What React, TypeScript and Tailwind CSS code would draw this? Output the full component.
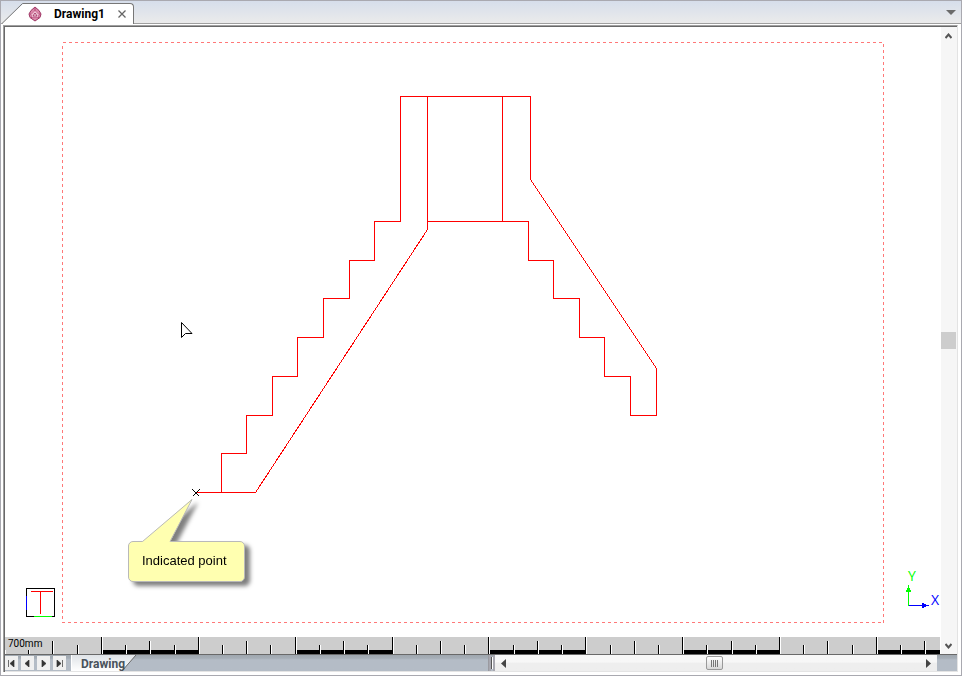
import React from 'react';

// Stair section, in window units
const OUTLINES = [
  '195,492 255,492 427,229 427,96',
  '221,492 221,453 246,453 246,415 272,415 272,376 297,376 297,337 323,337 323,298 349,298 349,260 374,260 374,221 400,221 400,96 530,96 530,179 656,368 656,415 630,415 630,376 604,376 604,337 579,337 579,298 553,298 553,260 528,260 528,221 427,221',
  '502,96 502,221',
];

const RULER_STEP = 24.22;
const RULER_TICKS = Array.from({ length: 160 }, (_, i) => i);

const DrawingIcon: React.FC = () => (
  <svg className="size-4" viewBox="0 0 16 16" aria-hidden="true">
    <path d="M8 1 L12 4.5 L14 8 L13 11.5 L8 15 L3 11.5 L2 8 L4 4.5 Z" fill="#d987a8" stroke="#9c3563" />
    <path d="M8 4.5 L12 8.5 L11 11.5 L5 11.5 L4 8.5 Z" fill="#f0c6d6" stroke="#c2608c" strokeWidth="0.8" />
    <path d="M8 1 V5 M4 12 L5 11 M12 12 L11 11 M2 8 H4 M14 8 H12" stroke="#b34a78" fill="none" />
    <path d="M8 7 L10 10 H6 Z" fill="#fff" stroke="#a83c6c" />
  </svg>
);

const DocumentTabs: React.FC = () => (
  <header className="flex h-[23px] shrink-0 items-end border-b border-[#a0a0a0] bg-linear-to-b from-[#d6deeb] to-[#ebebeb]">
    <div className="-mb-px flex h-[21px]">
      <svg className="h-[21px] w-[23px]" viewBox="0 0 23 21" aria-hidden="true">
        <path d="M1 21 L22 1 L23 1 L23 21 Z" fill="#fff" />
        <path d="M1 20.5 L21.5 0.5 L23 0.5" fill="none" stroke="#777" />
      </svg>
      <div className="flex items-center rounded-tr-sm border-t border-r border-[#777] bg-white pr-[5px]">
        <button className="flex items-center gap-[11px] pl-[3px] font-[Roboto,sans-serif] text-[12px] leading-4 font-bold text-black">
          <DrawingIcon />
          Drawing1
        </button>
        <button aria-label="Close Drawing1" className="ml-[11px] flex size-3 items-center justify-center">
          <svg className="size-2" viewBox="0 0 8 8">
            <path d="M0.5 0.5 L7.5 7.5 M7.5 0.5 L0.5 7.5" stroke="#666" strokeWidth="1.3" />
          </svg>
        </button>
      </div>
    </div>
    <button aria-label="Open drawings" className="mr-[5px] mb-2 ml-auto">
      <svg className="h-[5px] w-[10px]" viewBox="0 0 10 5">
        <path d="M0 0 H10 L5 5 Z" fill="#6b6b6b" />
      </svg>
    </button>
  </header>
);

const Callout: React.FC = () => (
  <div className="absolute top-[472px] left-[123px] drop-shadow-[5px_4px_2px_rgba(0,0,0,0.5)]">
    <svg className="relative z-10 -mb-px ml-[14px] block h-[43px] w-[52px]" viewBox="0 0 52 43" aria-hidden="true">
      <path d="M0 43 L50 0 L28 43 Z" fill="#ffffb0" />
      <path d="M0.5 42.5 L50 0.5 L28 42.5" fill="none" stroke="#b9b9b9" />
    </svg>
    <p className="w-[117px] rounded-[5px] border border-[#b9b9b9] bg-[#ffffb0] pt-[9px] pb-[10px] pl-[13px] font-['Liberation_Sans',sans-serif] text-[13px] leading-5 text-black">
      Indicated point
    </p>
  </div>
);

const Canvas: React.FC = () => (
  <main className="relative min-h-0 flex-1 overflow-hidden bg-white">
    <svg className="absolute inset-0 size-full" role="img" aria-label="Stair drawing">
      <g transform="translate(-4.5 -26.5)" fill="none" shapeRendering="crispEdges">
        {/* Sheet limits */}
        <rect x="62" y="42" width="821" height="580" stroke="#ff7878" strokeDasharray="3 3" />
        {OUTLINES.map((points) => (
          <polyline key={points} points={points} stroke="#ff0000" />
        ))}
        <path d="M192 489 L199 496 M199 489 L192 496" stroke="#000" />

        {/* View plane marker */}
        <rect x="26" y="588" width="28" height="28" stroke="#000" />
        <path d="M26 595 V609" stroke="#0000ff" />
        <path d="M33 616 H51" stroke="#00ff00" />
        <path d="M30 591 H52 M40 591 V613" stroke="#ff0000" />

        {/* Axes */}
        <path d="M908 605 V588" stroke="#00ff00" />
        <path d="M908 586 L910 591 L906 591 Z" fill="#00ff00" stroke="#00ff00" />
        <path d="M908 605 H928" stroke="#0000ff" />
        <path d="M922 603 L927 605 L922 607 Z" fill="#0000ff" stroke="#0000ff" />
      </g>
      <g fontFamily="'Open Sans', sans-serif" fontSize="14">
        <text x="903" y="554" fill="#00ff00">Y</text>
        <text x="926" y="578" fill="#0000ff">X</text>
      </g>
      <path d="M176.5 295.5 V310.5 L180.5 306.5 H187 Z" fill="#fff" stroke="#000" />
    </svg>
    <Callout />
  </main>
);

const Ruler: React.FC = () => (
  <div className="relative h-[17px] shrink-0 overflow-hidden bg-[#cdcdcd]">
    <svg className="absolute inset-0 size-full" aria-hidden="true" shapeRendering="crispEdges">
      {RULER_TICKS.map((i) => {
        const x = Math.round(i * RULER_STEP);
        const next = Math.round((i + 1) * RULER_STEP);
        // the first ticks are cut short under the unit label
        const height = i < 2 ? 4 : i % 4 === 0 ? 17 : i % 2 === 0 ? 13 : 9;
        const dark = i >= 4 && Math.floor(i / 4) % 2 === 1;
        return (
          <g key={i}>
            {dark && <rect x={x + 1} y="13" width={next - x - 2} height="4" fill="#000" />}
            <rect x={x - 1} y={17 - height} width="1" height={height} fill="#000" />
            <rect x={x} y={17 - height} width="1" height={height} fill="#fff" />
          </g>
        );
      })}
    </svg>
    <span className="relative block pl-[3px] font-[Roboto,sans-serif] text-[10px] leading-[14px] text-black">700mm</span>
  </div>
);

const VerticalScroll: React.FC = () => (
  <div className="flex w-[17px] shrink-0 flex-col items-center border-l border-white bg-[#f6f6f6] pr-px">
    <button aria-label="Scroll up" className="flex h-[17px] items-center">
      <svg className="h-[6px] w-[7px]" viewBox="0 0 7 6">
        <path d="M0.5 5 L3.5 1.5 L6.5 5" fill="none" stroke="#555" strokeWidth="2" />
      </svg>
    </button>
    <div className="flex w-full flex-1 flex-col items-center justify-center">
      <div className="h-[17px] w-full bg-[#cdcdcd]" />
    </div>
    <button aria-label="Scroll down" className="flex h-[17px] items-center">
      <svg className="h-[6px] w-[7px]" viewBox="0 0 7 6">
        <path d="M0.5 1 L3.5 4.5 L6.5 1" fill="none" stroke="#555" strokeWidth="2" />
      </svg>
    </button>
  </div>
);

const SHEET_BUTTONS = [
  { label: 'First sheet', path: 'M0.5 0 V7 M6 0 V7 L2 3.5 Z' },
  { label: 'Previous sheet', path: 'M5 0 V7 L1 3.5 Z' },
  { label: 'Next sheet', path: 'M2 0 V7 L6 3.5 Z' },
  { label: 'Last sheet', path: 'M1 0 V7 L5 3.5 Z M6.5 0 V7' },
];

const BottomBar: React.FC = () => (
  <footer className="flex h-[17px] shrink-0 border-b border-[#e4e4e4] bg-linear-to-b from-[#9fa7af] from-0% via-[#a6aeb7] via-20% to-[#b4bcc6] to-30%">
    <div className="flex w-[486px] shrink-0">
      <nav className="flex gap-[3px] py-px">
        {SHEET_BUTTONS.map(({ label, path }) => (
          <button key={label} aria-label={label} className="flex h-[14px] w-[13px] items-center justify-center bg-[#f0f0f0]">
            <svg className="h-[7px] w-[7px]" viewBox="0 0 7 7">
              <path d={path} fill="#333" stroke="#333" strokeWidth="0.7" />
            </svg>
          </button>
        ))}
      </nav>
      <button className="relative ml-[5px] h-4 w-[66px] pl-[10px] text-left font-[Roboto,sans-serif] text-[12px] leading-[18px] font-bold text-[#49525c]">
        <svg className="absolute inset-0 size-full" viewBox="0 0 66 16" aria-hidden="true">
          <defs>
            <linearGradient id="sheet-tab" x1="0" y1="0" x2="0" y2="1">
              <stop offset="0" stopColor="#dfe3e7" />
              <stop offset="1" stopColor="#fff" />
            </linearGradient>
          </defs>
          <path d="M0 0 H65 L51 16 H0 Z" fill="url(#sheet-tab)" />
          <path d="M0.5 0 V16" stroke="#fff" />
          <path d="M65 0 L51 16" stroke="#666" />
        </svg>
        <span className="relative">Drawing</span>
      </button>
      <div className="ml-auto flex w-[3px] border-l border-[#9a9aa0] bg-[#a8a8b0]" />
    </div>
    <div className="my-[2px] w-[2px] shrink-0 border-l border-[#555] bg-white" />
    <div className="w-[2px] shrink-0 bg-[#a8a8b0]" />
    <div className="flex min-w-0 flex-1 items-center bg-linear-to-b from-[#f7f7f7] from-45% to-[#eeeeee] to-50% px-[6px]">
      <button aria-label="Scroll left">
        <svg className="block h-[9px] w-[5px]" viewBox="0 0 5 9">
          <path d="M5 0 V9 L0 4.5 Z" fill="#444" />
        </svg>
      </button>
      <div className="flex flex-1 justify-center pr-1">
        <div className="flex h-[14px] w-[17px] items-center justify-center gap-px rounded-xs border border-[#999] bg-linear-to-b from-white to-[#d8d8d8]">
          <i className="h-[7px] w-px bg-[#777]" />
          <i className="h-[7px] w-px bg-[#777]" />
          <i className="h-[7px] w-px bg-[#777]" />
          <i className="h-[7px] w-px bg-[#777]" />
        </div>
      </div>
      <button aria-label="Scroll right">
        <svg className="block h-[9px] w-[5px]" viewBox="0 0 5 9">
          <path d="M0 0 V9 L5 4.5 Z" fill="#444" />
        </svg>
      </button>
    </div>
    <div className="w-5 shrink-0" />
  </footer>
);

const App: React.FC = () => {
  return (
    <div className="flex h-screen flex-col border border-[#a9a9b0] bg-white">
      <DocumentTabs />
      <div className="mt-px mr-[3px] mb-[3px] ml-[2px] flex min-h-0 flex-1 flex-col border-t border-r border-l border-t-[#a0a0a0] border-r-[#e3e3e3] border-l-[#a0a0a0]">
        <div className="flex min-h-0 flex-1 flex-col border-t border-l border-[#696969]">
          <div className="flex min-h-0 flex-1 border-b border-[#696969]">
            <div className="flex min-w-0 flex-1 flex-col">
              <Canvas />
              <Ruler />
            </div>
            <VerticalScroll />
          </div>
          <BottomBar />
        </div>
      </div>
    </div>
  );
};

export default App;
